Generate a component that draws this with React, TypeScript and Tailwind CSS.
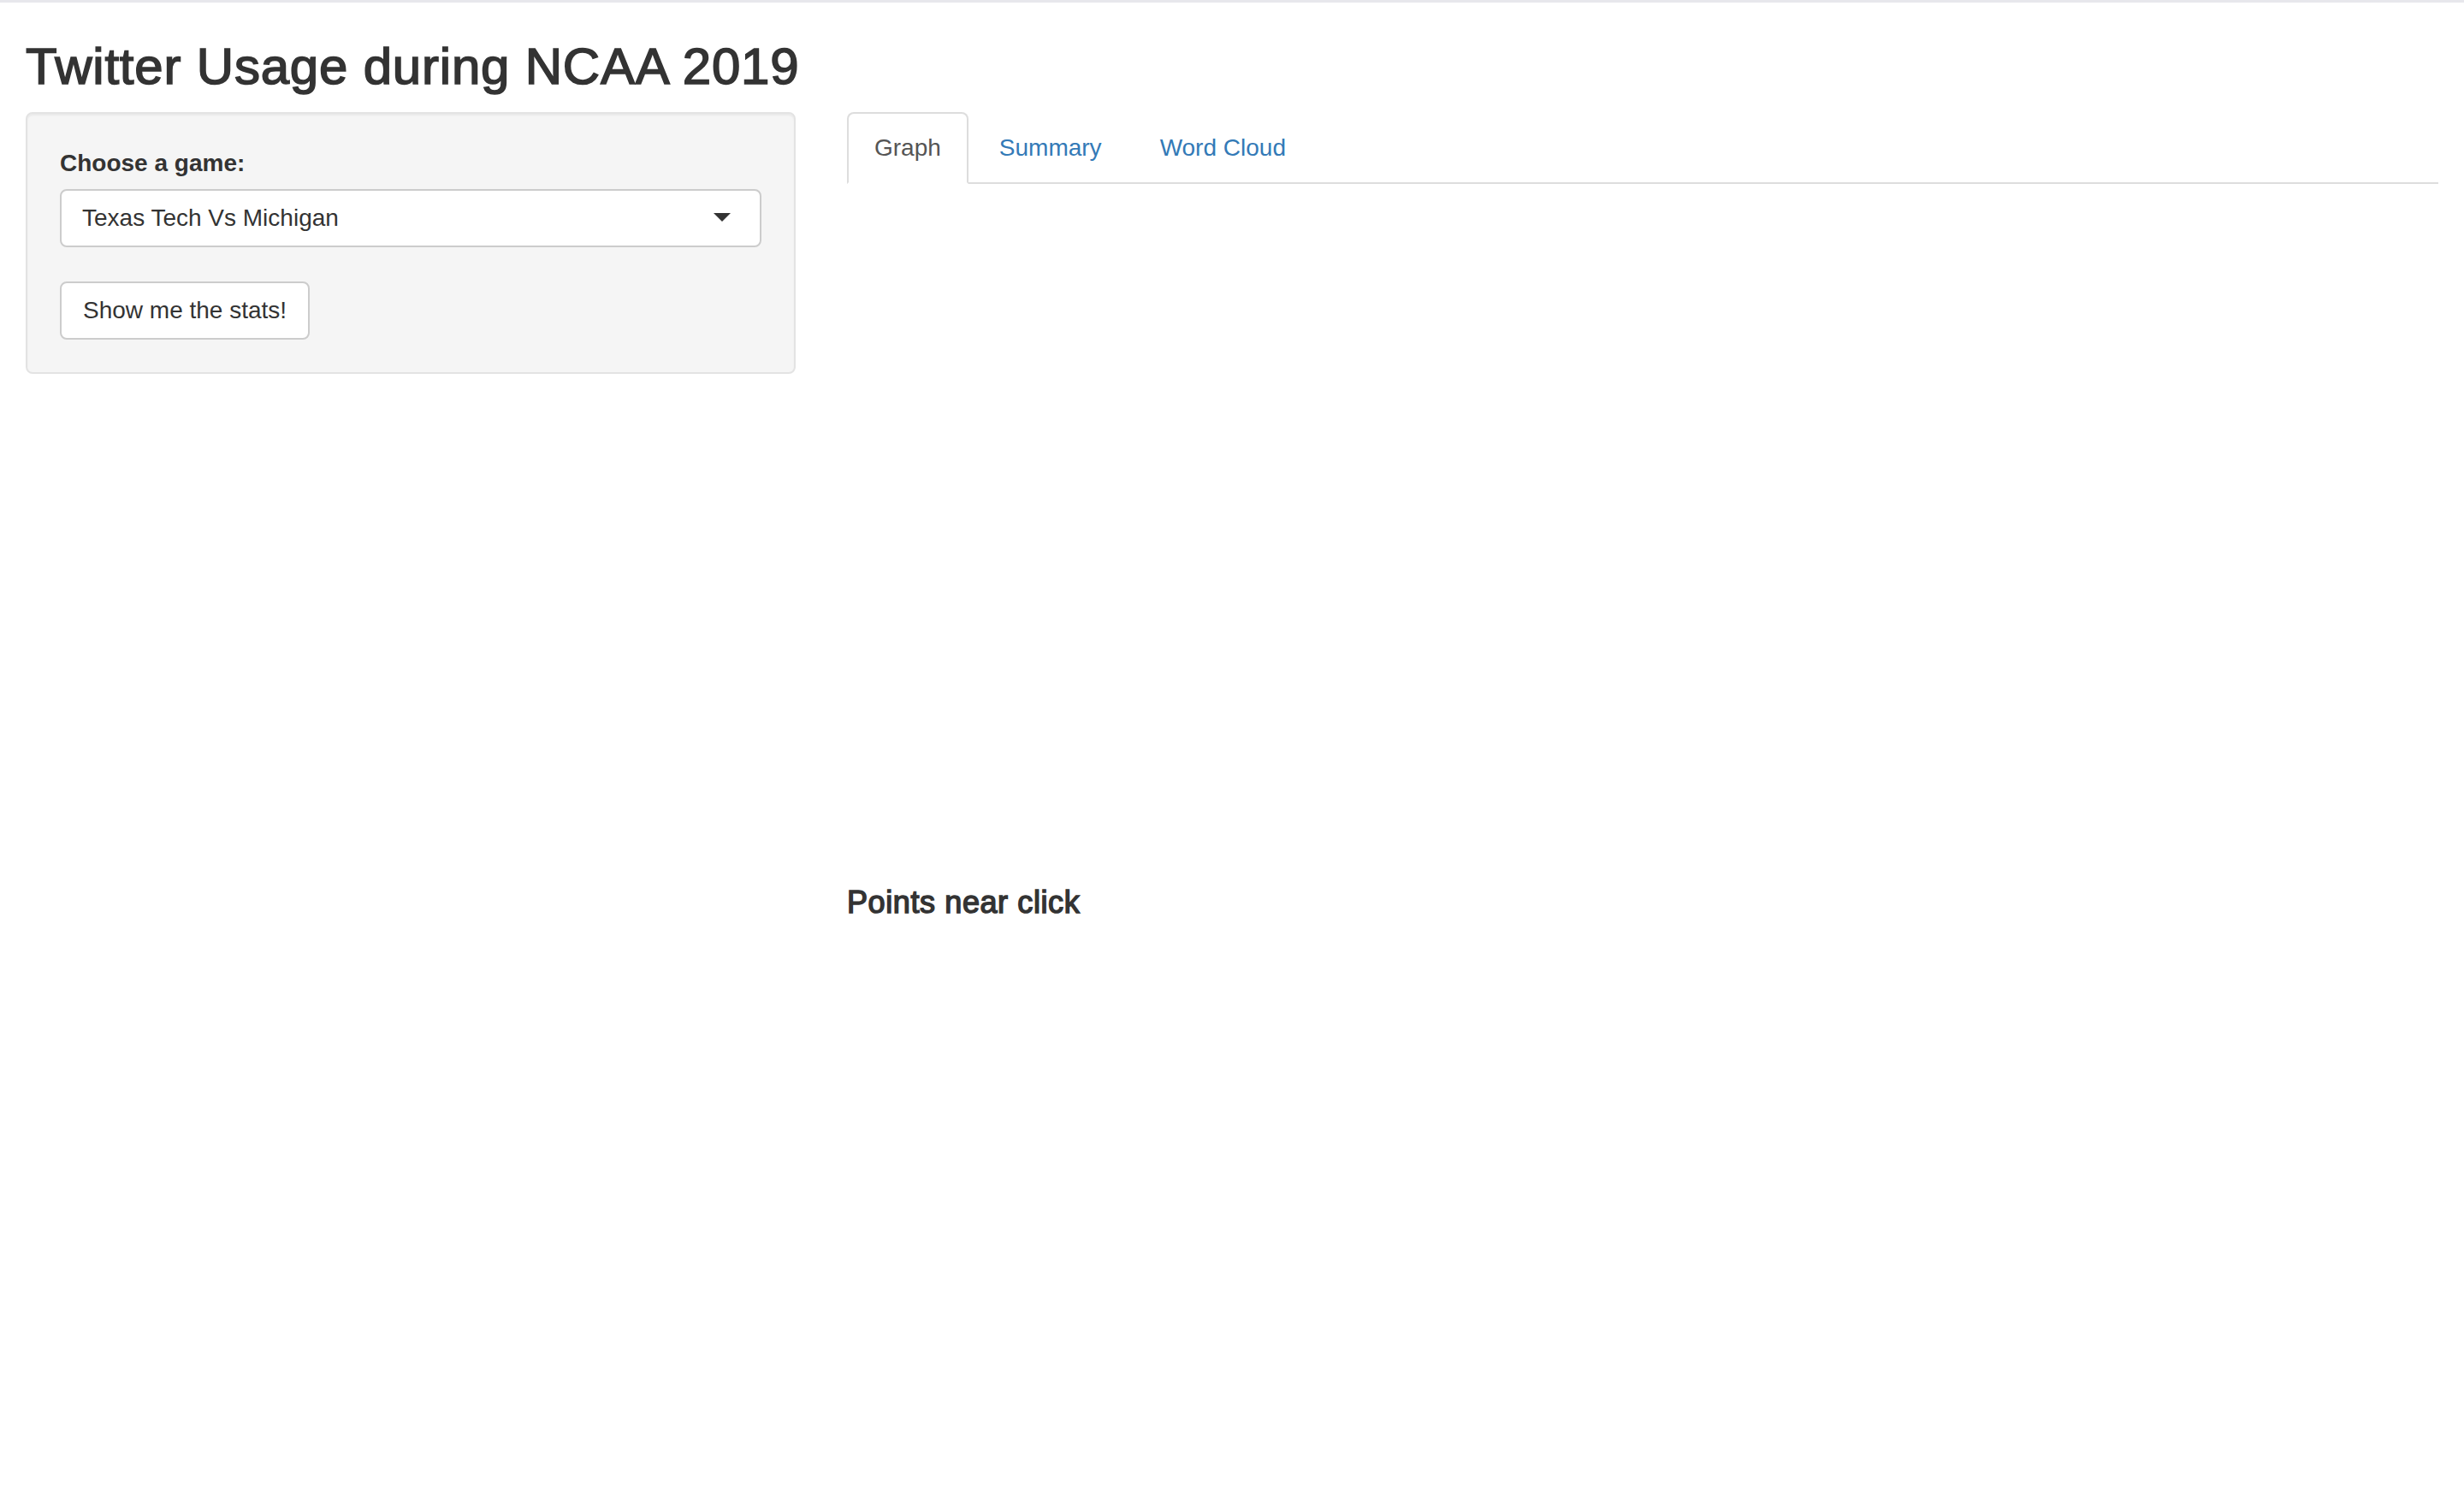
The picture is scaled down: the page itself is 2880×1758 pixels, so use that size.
export default function App() {
  return (
    <div className="min-h-screen bg-white text-[#333] [font-family:'Liberation_Sans',Arial,sans-serif] text-[28px] leading-[40px]">
      <div className="h-[3px] bg-[#e7e7ec]" />
      <div className="px-[30px]">
        <h2 className="mt-[42px] mb-[20px] text-[60px] leading-[66px] font-normal text-[#333] tracking-[0.8px] [-webkit-text-stroke:1.6px_#333]">
          Twitter Usage during NCAA 2019
        </h2>
        <div className="flex -mx-[30px]">
          <div className="w-1/3 px-[30px]">
            <div className="bg-[#f5f5f5] border-2 border-[#e3e3e3] rounded-[8px] p-[38px] shadow-[inset_0_2px_2px_rgba(0,0,0,0.05)]">
              <label className="block font-bold mb-[10px]">Choose a game:</label>
              <div className="relative h-[68px] border-2 border-[#ccc] rounded-[8px] bg-white px-[24px] flex items-center">
                <span>Texas Tech Vs Michigan</span>
                <span className="absolute right-[34px] top-1/2 -mt-[6px] w-0 h-0 border-t-[10px] border-t-[#333] border-x-[10px] border-x-transparent" />
              </div>
              <button className="mt-[40px] h-[68px] px-[25px] bg-white border-2 border-[#ccc] rounded-[8px] text-[#333] text-[28px] leading-[40px]">
                Show me the stats!
              </button>
            </div>
          </div>
          <div className="w-2/3 px-[30px]">
            <div className="flex border-b-2 border-[#ddd]">
              <div className="-mb-[2px] mr-[4px] px-[30px] py-[20px] border-2 border-[#ddd] border-b-transparent rounded-t-[8px] bg-white text-[#555]">
                Graph
              </div>
              <div className="-mb-[2px] mr-[4px] px-[30px] py-[20px] border-2 border-transparent text-[#337ab7]">
                Summary
              </div>
              <div className="-mb-[2px] mr-[4px] px-[30px] py-[20px] border-2 border-transparent text-[#337ab7]">
                Word Cloud
              </div>
            </div>
            <div className="h-[800px]" />
            <h4 className="mt-[20px] mb-[20px] text-[36px] leading-[40px] font-normal tracking-[0.6px] [-webkit-text-stroke:1.5px_#333]">
              Points near click
            </h4>
          </div>
        </div>
      </div>
    </div>
  );
}
